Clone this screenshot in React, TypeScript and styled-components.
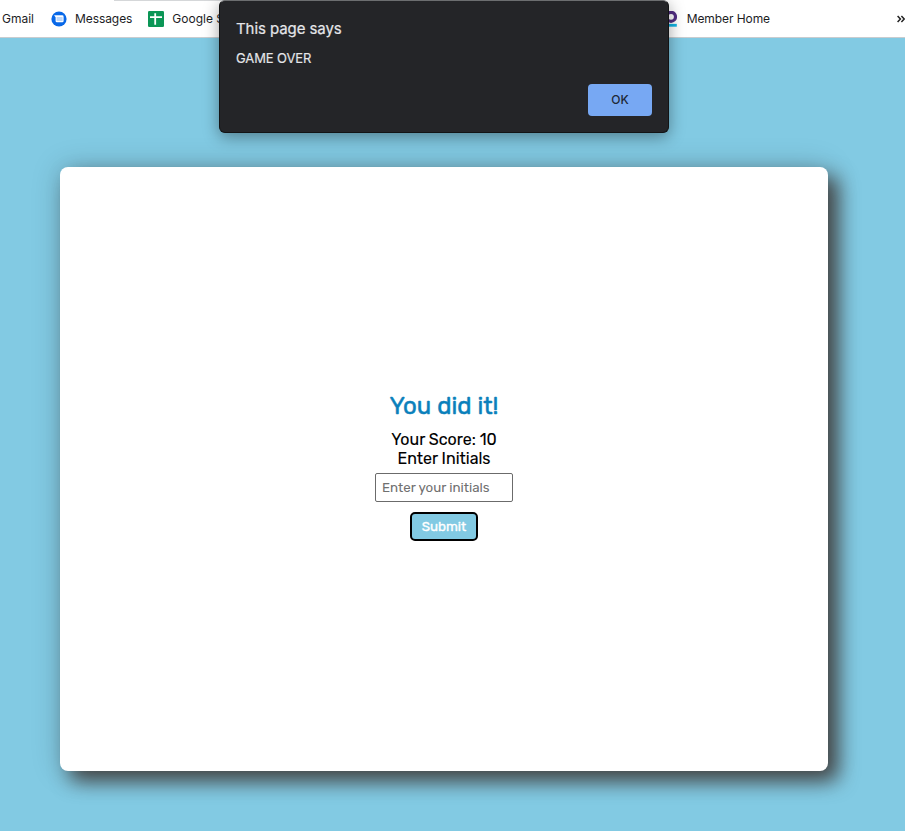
import React from "react";
import styled, { createGlobalStyle } from "styled-components";

const GlobalStyle = createGlobalStyle`
  * { box-sizing: border-box; }
  body { margin: 0; background: #fff; }
  #root { overflow: hidden; }
`;

const Page = styled.div`
  position: relative;
  display: flex;
  flex-direction: column;
  height: 831px;
  width: 905px;
  overflow: hidden;
  background: #82cae3;
`;

const BookmarksBar = styled.nav`
  position: relative;
  display: flex;
  align-items: center;
  height: 38px;
  flex: none;
  padding-left: 2px;
  background: #fff;
  border-bottom: 1px solid #c9cccf;
  font: 400 12px/16px Inter, sans-serif;
  color: #1c1d1f;
  white-space: nowrap;
`;

const Bookmark = styled.div<{ $start?: number; $gap?: number; $tracking?: number }>`
  display: flex;
  align-items: center;
  gap: ${(p) => p.$gap ?? 8}px;
  margin-left: ${(p) => p.$start ?? 0}px;
  letter-spacing: ${(p) => p.$tracking ?? 0}px;
  svg { display: block; flex: none; }
`;

const MemberBookmark = styled(Bookmark)`
  margin-left: auto;
  margin-right: 127px;
`;

const More = styled.span`
  width: 8px;
  flex: none;
  svg { display: block; }
`;

const TabEdge = styled.div`
  position: absolute;
  left: 114px;
  top: 0;
  width: 532px;
  height: 1px;
  background: #d5d7d9;
`;

const Main = styled.main`
  flex: none;
  height: 793px;
  padding: 129px 0 0 60px;
  background: #82cae3;
`;

const Card = styled.section`
  display: flex;
  flex-direction: column;
  align-items: center;
  width: 768px;
  height: 604px;
  padding-top: 223px;
  border-radius: 8px;
  background: #fff;
  box-shadow: 10px 10px 20px #444, 0 0 30px rgba(0, 0, 0, 0.18);
  font-family: Rubik, Roboto, sans-serif;
  color: #000;
`;

const Heading = styled.h1`
  margin: 0;
  font-size: 24px;
  font-weight: 400;
  line-height: 32px;
  color: #0a80bb;
  -webkit-text-stroke: 0.5px #0a80bb;
`;

const Line = styled.p<{ $top?: number }>`
  margin: ${(p) => p.$top ?? 0}px 0 0;
  font-size: 16px;
  line-height: 19px;
  -webkit-text-stroke: 0.1px #000;
`;

const InitialsInput = styled.input`
  width: 138px;
  height: 29px;
  margin: 5px 0 0;
  padding: 0 6px;
  border: 1px solid #6b6b6b;
  border-radius: 2px;
  background: #fff;
  outline: none;
  font: 400 13.33px Rubik, Roboto, sans-serif;
  &::placeholder { color: #707070; opacity: 1; }
`;

const Submit = styled.button`
  width: 68px;
  height: 29px;
  margin-top: 10px;
  padding: 0;
  border: 2px solid #000;
  border-radius: 5px;
  background: #82cae3;
  color: #fff;
  font: 400 13.33px Rubik, Roboto, sans-serif;
  -webkit-text-stroke: 0.35px #fff;
`;

const Dialog = styled.div`
  position: absolute;
  left: 219px;
  top: 0;
  display: flex;
  flex-direction: column;
  width: 450px;
  height: 133px;
  padding: 18px 16px 16px;
  border: 1px solid #131415;
  border-top-color: #6c6e70;
  border-radius: 6px;
  background: #242528;
  color: #e5e6e9;
  font-family: Inter, sans-serif;
  box-shadow: 0 4px 16px rgba(0, 0, 0, 0.38);
`;

const DialogTitle = styled.h2`
  margin: 0;
  font-size: 15px;
  font-weight: 400;
  line-height: 20px;
  letter-spacing: -0.08px;
  -webkit-text-stroke: 0.2px #e5e6e9;
`;

const DialogText = styled.p`
  margin: 10px 0 0;
  font-size: 13px;
  line-height: 18px;
  letter-spacing: -0.1px;
  -webkit-text-stroke: 0.15px #e5e6e9;
`;

const OkButton = styled.button`
  align-self: flex-end;
  width: 64px;
  height: 32px;
  margin-top: auto;
  padding: 0 0 1px;
  border: 0;
  border-radius: 4px;
  background: #77a8f3;
  color: #202938;
  font: 500 12px Inter, sans-serif;
`;

const MessagesIcon = () => (
  <svg width="16" height="16" viewBox="0 0 16 16">
    <circle cx="8" cy="8" r="7.6" fill="#0868e8" />
    <path d="M3 4.3h8.2a1.4 1.4 0 0 1 1.4 1.4v4.2a1.4 1.4 0 0 1-1.4 1.4H6A1.4 1.4 0 0 1 4.6 9.9V6.3Z" fill="#fff" />
    <rect x="5.6" y="6" width="6" height="4" fill="#bcd7fb" />
  </svg>
);

const SheetsIcon = () => (
  <svg width="16" height="16" viewBox="0 0 16 16">
    <rect width="16" height="16" rx="1.3" fill="#0b9656" />
    <path d="M2 6.2h12M7.2 2.2v11.6" stroke="#fff" strokeWidth="1.8" />
  </svg>
);

const MemberIcon = () => (
  <svg width="16" height="16" viewBox="0 0 16 16">
    <circle cx="10" cy="5.8" r="4.5" fill="none" stroke="#512d82" strokeWidth="3.2" />
    <path d="M2 14.3h13.8" stroke="#12b5e5" strokeWidth="2.8" />
  </svg>
);

export default function App() {
  return (
    <Page>
      <GlobalStyle />
      <BookmarksBar>
        <TabEdge />
        <Bookmark>Gmail</Bookmark>
        <Bookmark $start={17} $tracking={-0.08}><MessagesIcon />Messages</Bookmark>
        <Bookmark $start={16}><SheetsIcon />Google S</Bookmark>
        <MemberBookmark $gap={10} $tracking={-0.08}><MemberIcon />Member Home</MemberBookmark>
        <More>
          <svg width="8" height="8" viewBox="0 0 8 8" fill="none" stroke="#222" strokeWidth="1.5">
            <path d="M.6 1 3.4 4 .6 7M4.4 1 7.2 4 4.4 7" />
          </svg>
        </More>
      </BookmarksBar>
      <Main>
        <Card>
          <Heading>You did it!</Heading>
          <Line $top={8}>Your Score: 10</Line>
          <Line>Enter Initials</Line>
          <InitialsInput placeholder="Enter your initials" />
          <Submit>Submit</Submit>
        </Card>
      </Main>
      <Dialog role="alertdialog">
        <DialogTitle>This page says</DialogTitle>
        <DialogText>GAME OVER</DialogText>
        <OkButton>OK</OkButton>
      </Dialog>
    </Page>
  );
}
